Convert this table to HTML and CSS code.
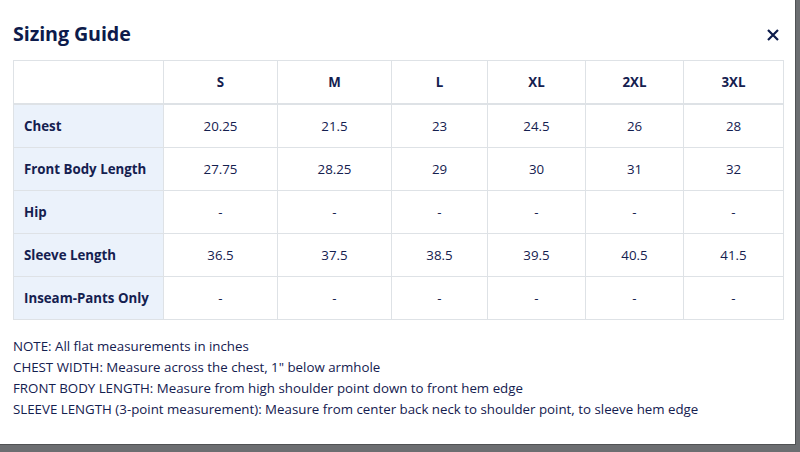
FILE: index.html
```html
<!DOCTYPE html>
<html>
<head>
<meta charset="utf-8">
<link rel="stylesheet" href="styles.css">
</head>
<body>
<div class="modal">
  <div class="modal-header">
    <h2 class="title">Sizing Guide</h2>
    <button class="close" aria-label="Close">
      <svg width="12" height="12" viewBox="0 0 12 12"><path d="M1 1L11 11M11 1L1 11" stroke="#0d1b4b" stroke-width="2.2" fill="none"/></svg>
    </button>
  </div>
  <table class="size-table">
    <colgroup>
      <col class="c-label"><col class="c-s"><col class="c-m"><col class="c-l"><col class="c-xl"><col class="c-2xl"><col class="c-3xl">
    </colgroup>
    <thead>
      <tr><th></th><th>S</th><th>M</th><th>L</th><th>XL</th><th>2XL</th><th>3XL</th></tr>
    </thead>
    <tbody>
      <tr><th>Chest</th><td>20.25</td><td>21.5</td><td>23</td><td>24.5</td><td>26</td><td>28</td></tr>
      <tr><th>Front Body Length</th><td>27.75</td><td>28.25</td><td>29</td><td>30</td><td>31</td><td>32</td></tr>
      <tr><th>Hip</th><td>-</td><td>-</td><td>-</td><td>-</td><td>-</td><td>-</td></tr>
      <tr><th>Sleeve Length</th><td>36.5</td><td>37.5</td><td>38.5</td><td>39.5</td><td>40.5</td><td>41.5</td></tr>
      <tr><th>Inseam-Pants Only</th><td>-</td><td>-</td><td>-</td><td>-</td><td>-</td><td>-</td></tr>
    </tbody>
  </table>
  <div class="notes">
    <p>NOTE: All flat measurements in inches</p>
    <p>CHEST WIDTH: Measure across the chest, 1" below armhole</p>
    <p>FRONT BODY LENGTH: Measure from high shoulder point down to front hem edge</p>
    <p>SLEEVE LENGTH (3-point measurement): Measure from center back neck to shoulder point, to sleeve hem edge</p>
  </div>
</div>
</body>
</html>
```

FILE: styles.css
```css
html, body {
  margin: 0;
  padding: 0;
}
body {
  background: #6c6e71;
  width: 800px;
  height: 452px;
  overflow: hidden;
  font-family: "Open Sans", "Noto Sans", sans-serif;
  color: #14204f;
}
.modal {
  width: 796px;
  height: 445px;
  background: #fff;
  box-sizing: border-box;
  padding: 0 13px;
  border-right: 1px solid #505254;
  border-bottom: 1px solid #505254;
}
.modal-header {
  display: flex;
  align-items: center;
  justify-content: space-between;
  height: 60px;
}
.title {
  margin: 0;
  font-size: 19.7px;
  font-weight: 700;
  color: #0d1b4b;
  letter-spacing: -0.1px;
  position: relative;
  top: 3px;
}
.close {
  border: 0;
  background: none;
  padding: 0;
  margin-right: 3px;
  width: 12px;
  height: 12px;
  display: flex;
  position: relative;
  top: 5px;
}
.size-table {
  border-collapse: collapse;
  table-layout: fixed;
  width: 770px;
  font-size: 13.3px;
}
.c-label { width: 150px; }
.c-s { width: 114px; }
.c-m { width: 114px; }
.c-l { width: 96px; }
.c-xl { width: 98px; }
.c-2xl { width: 98px; }
.c-3xl { width: 100px; }
.size-table th, .size-table td {
  border: 1px solid #dee2e6;
  height: 42px;
  padding: 0;
  text-align: center;
  color: #14204f;
}
.size-table thead th {
  height: 42px;
  font-weight: 700;
  border-bottom: 2px solid #dee2e6;
}
.size-table tbody th {
  text-align: left;
  padding-left: 10px;
  font-weight: 700;
  background: #ebf2fb;
}
.size-table td {
  font-weight: 400;
}
.notes {
  margin-top: 16px;
  font-size: 13.3px;
  line-height: 21px;
  color: #14204f;
}
.notes p {
  margin: 0;
}
```
